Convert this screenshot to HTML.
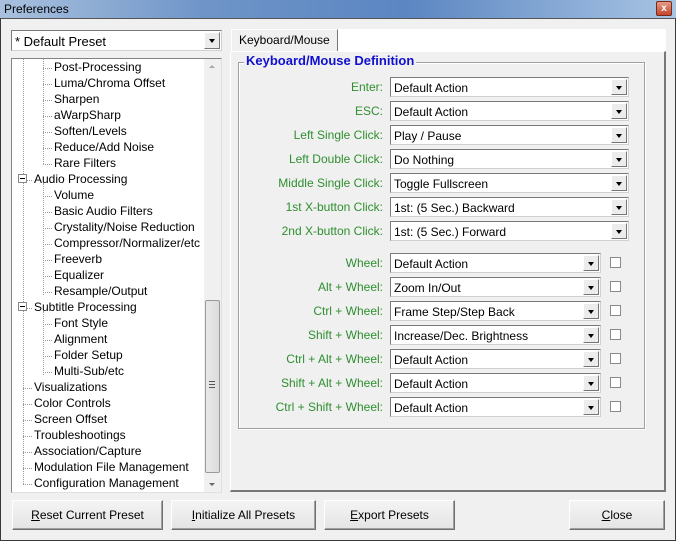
<!DOCTYPE html>
<html><head><style>
*{margin:0;padding:0;box-sizing:border-box}
body{width:676px;height:541px;overflow:hidden;background:#f0f0f0;font-family:"Liberation Sans",sans-serif;font-size:12px;color:#000;position:relative}
.a{position:absolute}
.title{left:0;top:0;width:676px;height:18px;background:linear-gradient(90deg,#a9c1de 0%,#6f95c8 30%,#5b86c2 60%,#a8c4e4 100%);}
.title span{position:absolute;left:4px;top:2px;font-size:12px;color:#000}
.frame{left:0;top:18px;width:676px;height:523px;border:1px solid #3a3a3a;border-top:1px solid #555}
.x{left:656px;top:1px;width:16px;height:15px;background:linear-gradient(#e49a86,#c4452b);border:1px solid #7a2a1a;border-radius:2px;color:#fff;font-size:10px;font-weight:bold;text-align:center;line-height:13px}
.combo{background:#fff;border:1px solid #7a7a7a;border-right-color:#d0d0d0;border-bottom-color:#d0d0d0;height:20px}
.combo span{position:absolute;left:3px;top:3px;white-space:nowrap}
.btn{position:absolute;right:1px;top:1px;width:16px;height:16px;background:#ececec;border:1px solid #fff;border-right-color:#777;border-bottom-color:#777}
.btn:after{content:"";position:absolute;left:4px;top:6px;border-left:3px solid transparent;border-right:3px solid transparent;border-top:4px solid #000}
.tree{left:11px;top:58px;width:211px;height:435px;background:#fff;border:1px solid #828282;border-right-color:#e0e0e0;border-bottom-color:#e0e0e0;overflow:hidden}
.ti{position:absolute;white-space:nowrap;font-size:12px}
.ti:before{content:"";position:absolute;left:-11px;top:8px;width:9px;border-top:1px dotted #999}
.lbl{position:absolute;right:293px;color:#2f8f2f;white-space:nowrap;text-align:right}
.chk{position:absolute;left:610px;width:11px;height:11px;border:1px solid #8a8a8a;background:#fff}
.pb{position:absolute;top:500px;height:30px;background:linear-gradient(#f4f4f4,#e4e4e4);border:1px solid #707070;border-top-color:#fff;border-left-color:#fff;box-shadow:inset -1px -1px 0 #a0a0a0;text-align:center;line-height:29px;font-size:12px}
.dv{position:absolute;width:1px;border-left:1px dotted #999}
</style></head><body>
<div class="a title"><span>Preferences</span></div>
<div class="a x">x</div>
<div class="a frame"></div>

<div class="a combo" style="left:11px;top:30px;width:211px;height:21px"><span style="top:3px;font-size:13px">* Default Preset</span><div class="btn" style="height:17px"></div></div>

<div class="a tree">
<div class="dv" style="left:11px;top:0;height:425px"></div>
<div class="dv" style="left:31px;top:0;height:105px"></div>
<div class="dv" style="left:31px;top:124px;height:112px"></div>
<div class="dv" style="left:31px;top:252px;height:64px"></div>
</div>
<div class="a" style="left:11px;top:58px;width:211px;height:435px">
<div class="a" style="left:193px;top:1px;width:17px;height:433px;background:#f0f0f0">
<div class="a" style="left:5px;top:6px;border-left:3px solid transparent;border-right:3px solid transparent;border-bottom:3px solid #aaa"></div>
<div class="a" style="left:1px;top:241px;width:15px;height:173px;background:linear-gradient(90deg,#e8e8e8,#dcdcdc);border:1px solid #9a9a9a;border-radius:2px"></div>
<div class="a" style="left:5px;top:322px;width:6px;height:7px;border-top:1px solid #555;border-bottom:1px solid #555"><div style="margin-top:2px;border-top:1px solid #555"></div></div>
<div class="a" style="left:5px;top:424px;border-left:3px solid transparent;border-right:3px solid transparent;border-top:3px solid #666"></div>
</div>
</div>
<div class="a" style="left:12px;top:59px;width:192px;height:433px;overflow:hidden">
<div class="ti" style="left:42px;top:1px">Post-Processing</div>
<div class="ti" style="left:42px;top:17px">Luma/Chroma Offset</div>
<div class="ti" style="left:42px;top:33px">Sharpen</div>
<div class="ti" style="left:42px;top:49px">aWarpSharp</div>
<div class="ti" style="left:42px;top:65px">Soften/Levels</div>
<div class="ti" style="left:42px;top:81px">Reduce/Add Noise</div>
<div class="ti" style="left:42px;top:97px">Rare Filters</div>
<div class="ti" style="left:22px;top:113px">Audio Processing</div>
<div class="ti" style="left:42px;top:129px">Volume</div>
<div class="ti" style="left:42px;top:145px">Basic Audio Filters</div>
<div class="ti" style="left:42px;top:161px">Crystality/Noise Reduction</div>
<div class="ti" style="left:42px;top:177px">Compressor/Normalizer/etc</div>
<div class="ti" style="left:42px;top:193px">Freeverb</div>
<div class="ti" style="left:42px;top:209px">Equalizer</div>
<div class="ti" style="left:42px;top:225px">Resample/Output</div>
<div class="ti" style="left:22px;top:241px">Subtitle Processing</div>
<div class="ti" style="left:42px;top:257px">Font Style</div>
<div class="ti" style="left:42px;top:273px">Alignment</div>
<div class="ti" style="left:42px;top:289px">Folder Setup</div>
<div class="ti" style="left:42px;top:305px">Multi-Sub/etc</div>
<div class="ti" style="left:22px;top:321px">Visualizations</div>
<div class="ti" style="left:22px;top:337px">Color Controls</div>
<div class="ti" style="left:22px;top:353px">Screen Offset</div>
<div class="ti" style="left:22px;top:369px">Troubleshootings</div>
<div class="ti" style="left:22px;top:385px">Association/Capture</div>
<div class="ti" style="left:22px;top:401px">Modulation File Management</div>
<div class="ti" style="left:22px;top:417px">Configuration Management</div>
<div class="a" style="left:6px;top:115px;width:9px;height:9px;border:1px solid #888;background:#fff"><div style="margin:3px 1px;border-top:1px solid #000"></div></div>
<div class="a" style="left:6px;top:243px;width:9px;height:9px;border:1px solid #888;background:#fff"><div style="margin:3px 1px;border-top:1px solid #000"></div></div>
</div>

<div class="a" style="left:231px;top:29px;width:435px;height:22px;background:#fff"></div>
<div class="a" style="left:231px;top:29px;width:107px;height:23px;background:#f0f0f0;border:1px solid #fff;border-right:1px solid #777;border-bottom:none;font-size:12px;padding:3px 0 0 7px">Keyboard/Mouse</div>
<div class="a" style="left:230px;top:51px;width:436px;height:441px;border:1px solid #fff;border-right:2px solid #777;border-bottom:2px solid #777"></div>
<div class="a" style="left:238px;top:62px;width:407px;height:367px;border:1px solid #a0a0a0;box-shadow:1px 1px 0 #fff,inset 1px 1px 0 #fff"></div>
<div class="a" style="left:244px;top:53px;background:#f0f0f0;padding:0 2px;color:#1010d0;font-weight:bold;font-size:13px">Keyboard/Mouse Definition</div>

<div class="lbl" style="top:80px">Enter:</div>
<div class="lbl" style="top:104px">ESC:</div>
<div class="lbl" style="top:128px">Left Single Click:</div>
<div class="lbl" style="top:152px">Left Double Click:</div>
<div class="lbl" style="top:176px">Middle Single Click:</div>
<div class="lbl" style="top:200px">1st X-button Click:</div>
<div class="lbl" style="top:224px">2nd X-button Click:</div>
<div class="a combo" style="left:390px;top:77px;width:239px"><span>Default Action</span><div class="btn"></div></div>
<div class="a combo" style="left:390px;top:101px;width:239px"><span>Default Action</span><div class="btn"></div></div>
<div class="a combo" style="left:390px;top:125px;width:239px"><span>Play / Pause</span><div class="btn"></div></div>
<div class="a combo" style="left:390px;top:149px;width:239px"><span>Do Nothing</span><div class="btn"></div></div>
<div class="a combo" style="left:390px;top:173px;width:239px"><span>Toggle Fullscreen</span><div class="btn"></div></div>
<div class="a combo" style="left:390px;top:197px;width:239px"><span>1st: (5 Sec.) Backward</span><div class="btn"></div></div>
<div class="a combo" style="left:390px;top:221px;width:239px"><span>1st: (5 Sec.) Forward</span><div class="btn"></div></div>

<div class="lbl" style="top:256px">Wheel:</div>
<div class="lbl" style="top:280px">Alt + Wheel:</div>
<div class="lbl" style="top:304px">Ctrl + Wheel:</div>
<div class="lbl" style="top:328px">Shift + Wheel:</div>
<div class="lbl" style="top:352px">Ctrl + Alt + Wheel:</div>
<div class="lbl" style="top:376px">Shift + Alt + Wheel:</div>
<div class="lbl" style="top:400px">Ctrl + Shift + Wheel:</div>
<div class="a combo" style="left:390px;top:253px;width:211px"><span>Default Action</span><div class="btn"></div></div>
<div class="a combo" style="left:390px;top:277px;width:211px"><span>Zoom In/Out</span><div class="btn"></div></div>
<div class="a combo" style="left:390px;top:301px;width:211px"><span>Frame Step/Step Back</span><div class="btn"></div></div>
<div class="a combo" style="left:390px;top:325px;width:211px"><span>Increase/Dec. Brightness</span><div class="btn"></div></div>
<div class="a combo" style="left:390px;top:349px;width:211px"><span>Default Action</span><div class="btn"></div></div>
<div class="a combo" style="left:390px;top:373px;width:211px"><span>Default Action</span><div class="btn"></div></div>
<div class="a combo" style="left:390px;top:397px;width:211px"><span>Default Action</span><div class="btn"></div></div>
<div class="chk" style="top:257px"></div>
<div class="chk" style="top:281px"></div>
<div class="chk" style="top:305px"></div>
<div class="chk" style="top:329px"></div>
<div class="chk" style="top:353px"></div>
<div class="chk" style="top:377px"></div>
<div class="chk" style="top:401px"></div>

<div class="pb" style="left:12px;width:151px"><u>R</u>eset Current Preset</div>
<div class="pb" style="left:171px;width:145px"><u>I</u>nitialize All Presets</div>
<div class="pb" style="left:324px;width:131px"><u>E</u>xport Presets</div>
<div class="pb" style="left:569px;width:96px"><u>C</u>lose</div>
</body></html>
